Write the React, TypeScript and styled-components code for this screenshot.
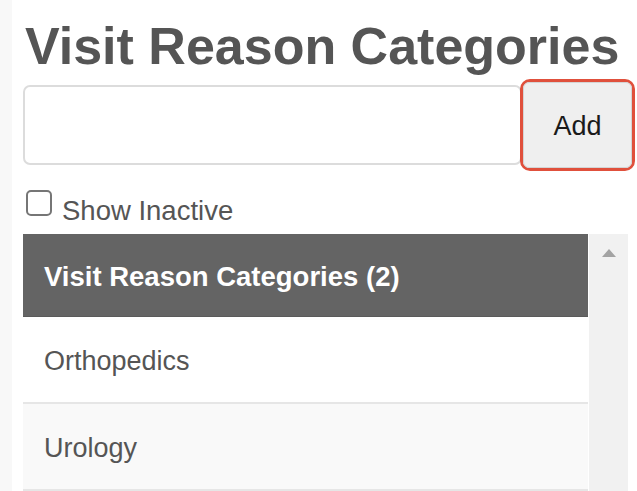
import React from "react";
import styled, { createGlobalStyle } from "styled-components";

const GlobalStyle = createGlobalStyle`
  html, body {
    margin: 0;
    padding: 0;
    background: #ffffff;
    font-family: "Liberation Sans", Arial, sans-serif;
  }
  * { box-sizing: border-box; }
`;

const Page = styled.div`
  display: flex;
  width: 637px;
  height: 491px;
  overflow: hidden;
  background: #ffffff;
`;

const Gutter = styled.div`
  width: 12px;
  flex: 0 0 12px;
  background: #f8f8f8;
`;

const Content = styled.div`
  flex: 1;
  display: flex;
  flex-direction: column;
  padding: 18px 0 0 11px;
`;

const Title = styled.h1`
  margin: 0;
  font-size: 52px;
  line-height: 57px;
  font-weight: 700;
  color: #555555;
  padding-left: 2px;
  white-space: nowrap;
`;

const FormRow = styled.div`
  display: flex;
  align-items: center;
  margin-top: 4px;
  padding-right: 2px;
`;

const TextInput = styled.input`
  flex: 1;
  height: 80px;
  border: 2px solid #dcdcdc;
  border-radius: 7px;
  background: #ffffff;
  margin-right: -2px;
  outline: none;
`;

const FocusRing = styled.div`
  border: 3px solid #e0503c;
  border-radius: 10px;
  display: flex;
`;

const AddButton = styled.button`
  width: 109px;
  height: 86px;
  border: 1px solid #d4d4d4;
  border-radius: 6px;
  background: #efefef;
  font-family: "Liberation Sans", Arial, sans-serif;
  font-size: 27px;
  color: #1a1a1a;
  padding: 3px 0 0 0;
`;

const CheckRow = styled.label`
  display: flex;
  align-items: flex-start;
  margin-top: 19px;
  margin-left: 3px;
  gap: 10px;
  font-size: 27.5px;
  line-height: 30px;
  color: #555555;
`;

const CheckBox = styled.span`
  width: 26px;
  height: 26px;
  flex: 0 0 26px;
  border: 2px solid #767676;
  border-radius: 5px;
  background: #ffffff;
  display: inline-block;
`;

const CheckText = styled.span`
  margin-top: 6px;
`;

const ListArea = styled.div`
  display: flex;
  margin-top: 8px;
  flex: 1;
`;

const Table = styled.div`
  width: 565px;
  flex: 0 0 565px;
  display: flex;
  flex-direction: column;
`;

const HeaderRow = styled.div`
  height: 83px;
  flex: 0 0 83px;
  background: #646464;
  color: #ffffff;
  font-weight: 700;
  font-size: 27.5px;
  display: flex;
  align-items: center;
  padding-left: 21px;
  padding-top: 3px;
  border-bottom: 1px solid #5a5a5a;
`;

const Row = styled.div<{ $alt?: boolean }>`
  height: 87px;
  flex: 0 0 87px;
  background: ${(p) => (p.$alt ? "#f9f9f9" : "#ffffff")};
  color: #555555;
  font-size: 27px;
  display: flex;
  align-items: center;
  padding-left: 21px;
  padding-top: 4px;
  border-bottom: 2px solid #e6e6e6;
`;

const Scrollbar = styled.div`
  width: 39px;
  flex: 0 0 39px;
  margin-left: 1px;
  background: #f1f1f1;
  display: flex;
  justify-content: center;
  padding-top: 15px;
`;

const UpArrow = styled.div`
  width: 0;
  height: 0;
  border-left: 7px solid transparent;
  border-right: 7px solid transparent;
  border-bottom: 8px solid #a3a3a3;
`;

export default function App() {
  return (
    <>
      <GlobalStyle />
      <Page>
        <Gutter />
        <Content>
          <Title>Visit Reason Categories</Title>
          <FormRow>
            <TextInput type="text" />
            <FocusRing>
              <AddButton>Add</AddButton>
            </FocusRing>
          </FormRow>
          <CheckRow>
            <CheckBox />
            <CheckText>Show Inactive</CheckText>
          </CheckRow>
          <ListArea>
            <Table>
              <HeaderRow>Visit Reason Categories (2)</HeaderRow>
              <Row>Orthopedics</Row>
              <Row $alt>Urology</Row>
            </Table>
            <Scrollbar>
              <UpArrow />
            </Scrollbar>
          </ListArea>
        </Content>
      </Page>
    </>
  );
}
